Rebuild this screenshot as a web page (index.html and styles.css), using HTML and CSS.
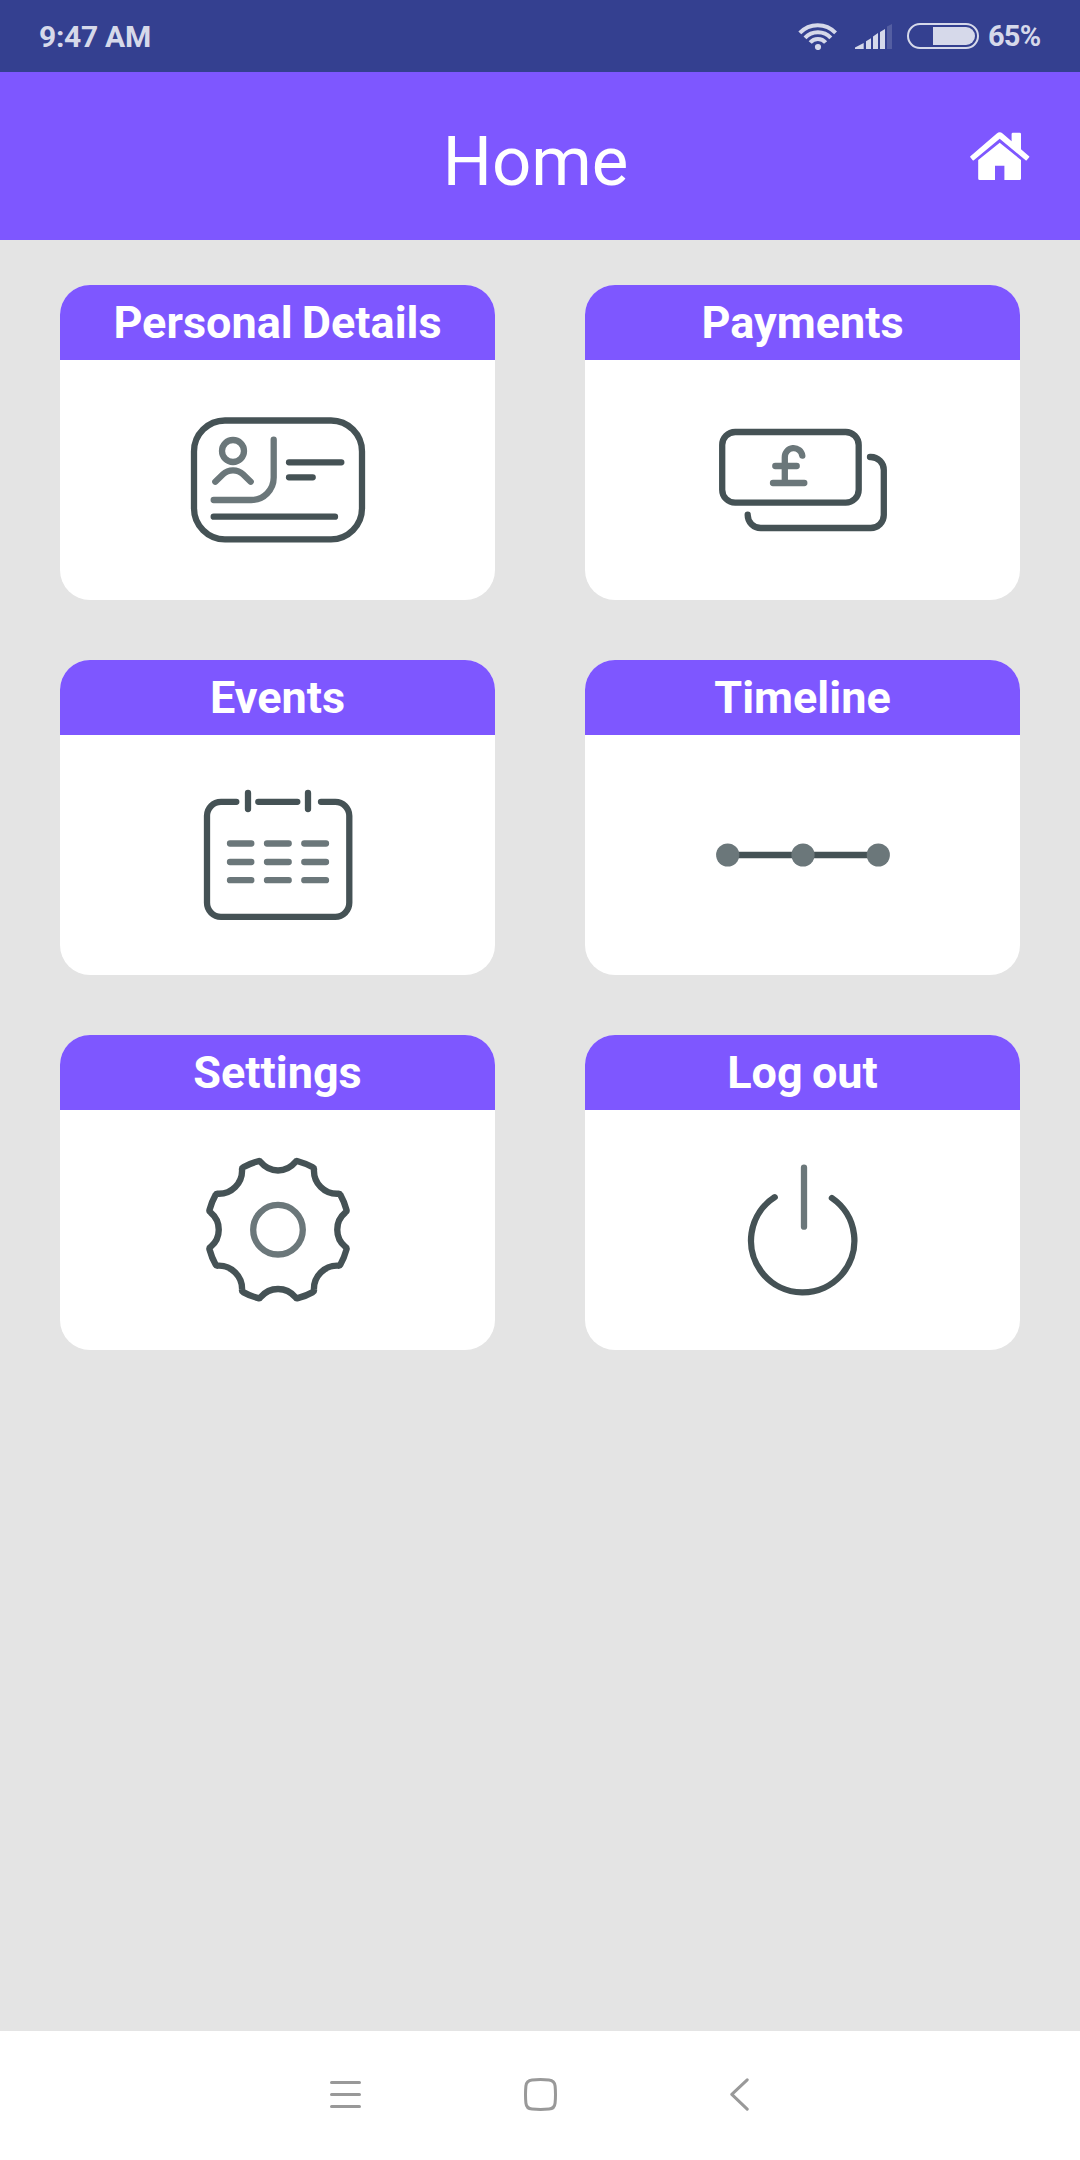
FILE: index.html
```
<!DOCTYPE html>
<html lang="en">
<head>
  <meta charset="UTF-8" />
  <meta name="viewport" content="width=device-width, initial-scale=1.0" />
  <title>Home</title>
  <link rel="stylesheet" href="styles.css">
</head>
<body>
  <div class="status-bar">
    <span class="time">9:47 AM</span>
    <svg class="wifi" width="39" height="27" viewBox="0 0 39 27">
      <path d="M1.8 9.9A24.7 24.7 0 0 1 37.6 9.9M7 14.9A17.4 17.4 0 0 1 32.8 14.9M12.2 19.5A10 10 0 0 1 27.6 19.5" />
      <circle cx="20" cy="24" r="3.1" />
    </svg>
    <svg class="signal" width="37" height="25" viewBox="0 0 37 25">
      <path d="M0 25V23.5L8.7 19V25ZM11 25V17.3L16 14.3V25ZM18 25V12.5L23 9V25ZM25 25V8L30 5V25Z" />
      <path class="faded" d="M32 25V2.5L37 0V25Z" />
    </svg>
    <div class="battery"><div class="battery-level"></div></div>
    <span class="percent">65%</span>
  </div>

  <header class="header">
    <h1>Home</h1>
    <svg class="home-icon" width="60" height="48" viewBox="0 0 60 48">
      <path d="M0.4 24.2L26.8 1.4Q29.7 -0.8 32.6 1.4L41.6 9.2V2Q41.6 0.7 42.9 0.7H49.7Q51 0.7 51 2V17.3L59.1 24.2Q59.6 24.7 59.2 25.2L56.7 28.3Q56.2 28.8 55.6 28.3L29.7 6.8L3.8 28.3Q3.2 28.8 2.7 28.3L0.3 25.2Q-0.1 24.7 0.4 24.2Z" />
      <path d="M29.7 10.7L51 28V46.5Q51 48 49.5 48H34.4V33.7H25V48H9.7Q8.2 48 8.2 46.5V28Z" />
    </svg>
  </header>

  <main class="menu">
    <div class="card">
      <h2>Personal Details</h2>
      <svg class="icon" width="181" height="150" viewBox="-0.5 0 181 150">
        <rect x="6.5" y="15.5" width="168" height="118.8" rx="31" />
        <path d="M101.5 57.3H153.8M101.5 72.3H125.2M26.2 111.7H147.5" />
        <g class="light">
          <circle cx="45.5" cy="46" r="11" />
          <path d="M27.8 76.7L35.5 69.3C41 64 50 64 55.5 69.3L63.2 76.7" />
          <path d="M86.2 34.7V72.5A22.5 22.5 0 0 1 63.7 95H26.2" />
        </g>
      </svg>
    </div>

    <div class="card">
      <h2>Payments</h2>
      <svg class="icon" width="181" height="150" viewBox="-0.5 0 181 150">
        <rect x="9.7" y="27" width="136.5" height="70.7" rx="13" />
        <path d="M157.5 52H158.3A13 13 0 0 1 171.3 65V110A13 13 0 0 1 158.3 123H48.2A13 13 0 0 1 35.2 110V109.7" />
        <path class="light" d="M60.5 78H91.8M62.8 61H84.2M72.3 78V52.4A8.8 8.8 0 0 1 89.8 50.7" />
      </svg>
    </div>

    <div class="card">
      <h2>Events</h2>
      <svg class="icon" width="181" height="150" viewBox="-0.5 0 181 150">
        <path d="M48.8 21.8H33.5A14 14 0 0 0 19.5 35.8V122.8A14 14 0 0 0 33.5 136.8H147.8A14 14 0 0 0 161.8 122.8V35.8A14 14 0 0 0 147.8 21.8H133.5" />
        <path d="M70.8 21.8H109.8M60.5 13V29M120.5 13V29" />
        <g class="light">
          <path d="M42.5 63.5H63.8M79.5 63.5H101.2M116.8 63.5H138.5" />
          <path d="M42.5 82H63.8M79.5 82H101.2M116.8 82H138.5" />
          <path d="M42.5 100.2H63.8M79.5 100.2H101.2M116.8 100.2H138.5" />
        </g>
      </svg>
    </div>

    <div class="card">
      <h2>Timeline</h2>
      <svg class="icon" width="181" height="150" viewBox="-0.5 0 181 150">
        <path d="M15.2 75H165.8" />
        <g class="dots">
          <circle cx="15.2" cy="75" r="11.6" />
          <circle cx="90.5" cy="75" r="11.6" />
          <circle cx="165.8" cy="75" r="11.6" />
        </g>
      </svg>
    </div>

    <div class="card">
      <h2>Settings</h2>
      <svg class="icon" width="181" height="150" viewBox="-0.5 0 181 150">
        <path transform="translate(-0.9 -0.75) scale(1.01)" d="M73.5 8Q72.6 6.4 70.9 6.9Q62.5 9.2 56 12.9Q54.6 13.6 54.9 15.3A23 23 0 0 1 31.1 39.1Q29.4 38.8 28.7 40.2Q25 46.7 22.7 55.1Q22.2 56.8 23.8 57.7A22 22 0 0 1 23.8 91.7Q22.2 92.6 22.7 94.3Q25 102.7 28.7 109.2Q29.4 110.6 31.1 110.3A23 23 0 0 1 54.9 134.1Q54.6 135.8 56 136.5Q62.5 140.2 70.9 142.5Q72.6 143 73.5 141.4A22 22 0 0 1 107.5 141.4Q108.4 143 110.1 142.5Q118.5 140.2 125 136.5Q126.4 135.8 126.1 134.1A23 23 0 0 1 149.9 110.3Q151.6 110.6 152.3 109.2Q156 102.7 158.3 94.3Q158.8 92.6 157.2 91.7A22 22 0 0 1 157.2 57.7Q158.8 56.8 158.3 55.1Q156 46.7 152.3 40.2Q151.6 38.8 149.9 39.1A23 23 0 0 1 126.1 15.3Q126.4 13.6 125 12.9Q118.5 9.2 110.1 6.9Q108.4 6.4 107.5 8A22 22 0 0 1 73.5 8Z" />
        <circle class="light" cx="90.5" cy="74.7" r="24.8" />
      </svg>
    </div>

    <div class="card">
      <h2>Log out</h2>
      <svg class="icon" width="181" height="150" viewBox="-0.5 0 181 150">
        <path d="M62.2 42.2A51.7 51.7 0 1 0 119.4 43" />
        <path class="light" d="M91.5 12.7V71.7" />
      </svg>
    </div>
  </main>

  <nav class="nav-bar">
    <svg width="31" height="33" viewBox="0 0 31 33">
      <path d="M1.5 4.5H29.5M1.5 16.5H29.5M1.5 28.5H29.5" />
    </svg>
    <svg width="33" height="33" viewBox="0 0 33 33">
      <path d="M8 1.9Q16.5 1.1 25 1.9Q30.6 2.4 31.1 8Q31.9 16.5 31.1 25Q30.6 30.6 25 31.1Q16.5 31.9 8 31.1Q2.4 30.6 1.9 25Q1.1 16.5 1.9 8Q2.4 2.4 8 1.9Z" />
    </svg>
    <svg width="19" height="33" viewBox="0 0 19 33">
      <path d="M17.2 1.8L1.8 16.4L17.2 31.2" />
    </svg>
  </nav>
</body>
</html>
```
FILE: styles.css
```
body {
  background-color: #e4e4e4;
  font-family: Roboto, sans-serif;
  margin: 0;
  height: 100vh;
  display: flex;
  flex-direction: column;
}
h1, h2 {
  margin: 0;
}

/* Status bar */
.status-bar {
  background-color: #344090;
  color: #d6d9ea;
  height: 72px;
  padding: 0 39px;
  display: flex;
  align-items: center;
}
.time {
  font-size: 30px;
  font-weight: 700;
  letter-spacing: -0.3px;
  margin-right: auto;
}
.percent {
  font-size: 29px;
  font-weight: 700;
  letter-spacing: -0.8px;
  width: 53px;
}
.wifi {
  margin-right: 18px;
  fill: #d6d9ea;
}
.wifi path {
  fill: none;
  stroke: #d6d9ea;
  stroke-width: 4;
}
.signal {
  margin-right: 15px;
  fill: #d6d9ea;
}
.faded {
  opacity: 0.2;
}
.battery {
  box-sizing: border-box;
  width: 72px;
  height: 26px;
  border: 2px solid #d6d9ea;
  border-radius: 13px;
  padding: 2px;
  margin-right: 9px;
}
.battery-level {
  width: 42px;
  height: 18px;
  margin-left: auto;
  background-color: #d6d9ea;
  border-radius: 0 9px 9px 0;
}

/* Header */
.header {
  background-color: #7e57ff;
  color: #fff;
  height: 168px;
  padding: 0 50px;
  display: grid;
  grid-template-columns: 1fr auto 1fr;
  align-items: center;
}
.header h1 {
  grid-column: 2;
  font-size: 69px;
  font-weight: 400;
  padding: 11px 9px 0 0;
}
.home-icon {
  justify-self: end;
  fill: #fff;
}

/* Cards */
.menu {
  flex: 1;
  padding: 45px 60px;
  display: grid;
  grid-template-columns: 1fr 1fr;
  gap: 60px 90px;
  align-content: start;
}
.card {
  height: 315px;
  background-color: #fff;
  border-radius: 30px;
  overflow: hidden;
  display: flex;
  flex-direction: column;
  align-items: center;
}
.card h2 {
  width: 100%;
  background-color: #7e57ff;
  color: #fff;
  font-size: 45px;
  font-weight: 700;
  line-height: 75px;
  height: 75px;
  text-align: center;
  word-spacing: -2px;
}
.icon {
  margin: 45px 0;
  fill: none;
  stroke: #455255;
  stroke-width: 6.3;
  stroke-linecap: round;
  stroke-linejoin: round;
}
.light {
  stroke: #6b777a;
}
.dots {
  fill: #6b777a;
  stroke: none;
}

/* Bottom navigation */
.nav-bar {
  background-color: #fff;
  height: 127px;
  padding: 0 0 2px 330px;
  display: flex;
  align-items: center;
}
.nav-bar svg {
  fill: none;
  stroke: #999;
  stroke-width: 3;
  stroke-linecap: round;
  stroke-linejoin: round;
  margin-right: 163px;
}
.nav-bar svg:nth-child(2) {
  margin-right: 173px;
}
```
